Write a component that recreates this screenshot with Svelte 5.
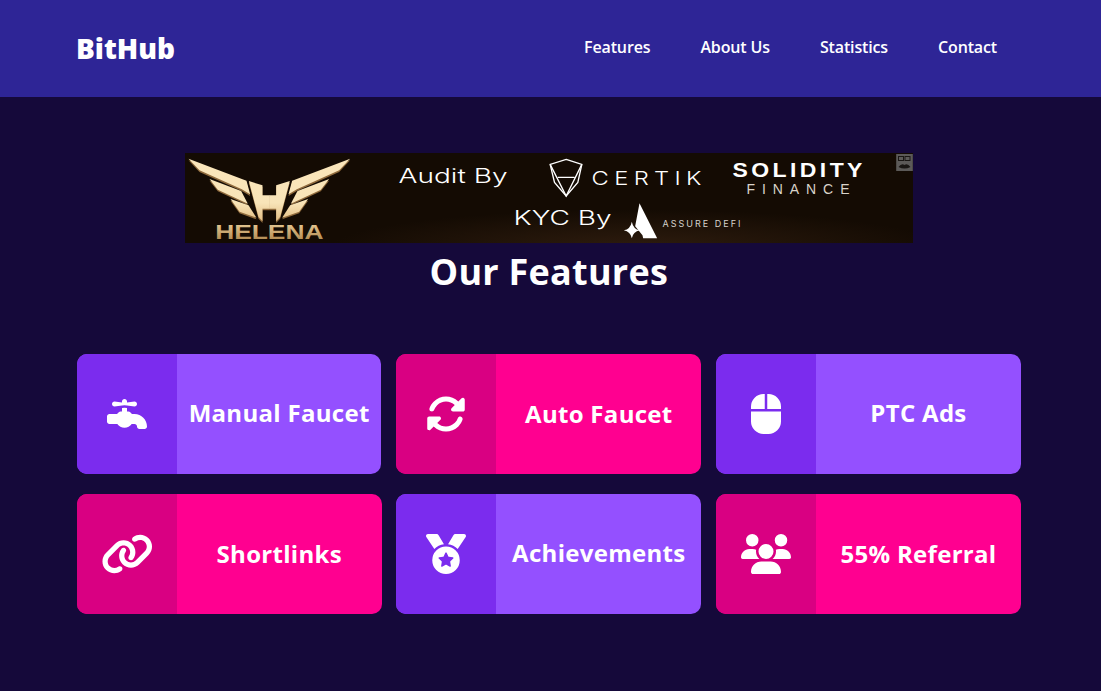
<script>
  const nav = ['Features', 'About Us', 'Statistics', 'Contact'];
  const icons = {
    faucet: { vb: '0 0 512 512', d: 'M192 96v12L96 96c-17.7 0-32 14.3-32 32s14.3 32 32 32l96-12 31-3.9 1-.1 1 .1 31 3.9 96 12c17.7 0 32-14.3 32-32s-14.3-32-32-32l-96 12V96c0-17.7-14.3-32-32-32s-32 14.3-32 32zM32 256c-17.7 0-32 14.3-32 32v64c0 17.7 14.3 32 32 32H132.1c20.2 29 53.9 48 91.9 48s71.7-19 91.9-48H352c17.7 0 32 14.3 32 32s14.3 32 32 32h64c17.7 0 32-14.3 32-32c0-88.4-71.6-160-160-160H320l-22.6-22.6c-6-6-14.1-9.4-22.6-9.4H256V180.2l-32-4-32 4V224H173.3c-8.5 0-16.6 3.4-22.6 9.4L128 256H32z' },
    sync: { vb: '0 0 512 512', d: 'M142.9 142.9c62.2-62.2 162.7-62.5 225.3-1L327 183c-6.9 6.9-8.9 17.2-5.2 26.2s12.5 14.8 22.2 14.8H463.5c0 0 0 0 0 0H472c13.3 0 24-10.7 24-24V72c0-9.7-5.8-18.5-14.8-22.2s-19.3-1.7-26.2 5.2L413.4 96.6c-87.6-86.5-228.7-86.2-315.8 1C73.2 122 55.6 150.7 44.8 181.4c-5.9 16.7 2.9 34.9 19.5 40.8s34.9-2.9 40.8-19.5c7.7-21.8 20.2-42.3 37.8-59.8zM16 312v7.6 .7V440c0 9.7 5.8 18.5 14.8 22.2s19.3 1.7 26.2-5.2l41.6-41.6c87.6 86.5 228.7 86.2 315.8-1c24.4-24.4 42.1-53.1 52.9-83.7c5.9-16.7-2.9-34.9-19.5-40.8s-34.9 2.9-40.8 19.5c-7.7 21.8-20.2 42.3-37.8 59.8c-62.2 62.2-162.7 62.5-225.3 1L185 329c6.9-6.9 8.9-17.2 5.2-26.2s-12.5-14.8-22.2-14.8H48.4h-.7H40c-13.3 0-24 10.7-24 24z' },
    mouse: { vb: '0 0 384 512', d: 'M0 352a160 160 0 0 0 160 160h64a160 160 0 0 0 160-160V224H0zM176 0h-16A160 160 0 0 0 0 160v32h176zm48 0h-16v192h176v-32A160 160 0 0 0 224 0z' },
    link: { vb: '0 0 640 512', d: 'M579.8 267.7c56.5-56.5 56.5-148 0-204.5c-50-50-128.8-56.5-186.3-15.4l-1.6 1.1c-14.4 10.3-17.7 30.3-7.4 44.6s30.3 17.7 44.6 7.4l1.6-1.1c32.1-22.9 76-19.3 103.8 8.6c31.5 31.5 31.5 82.5 0 114L422.3 334.8c-31.5 31.5-82.5 31.5-114 0c-27.9-27.9-31.5-71.8-8.6-103.8l1.1-1.6c10.3-14.4 6.9-34.4-7.4-44.6s-34.4-6.9-44.6 7.4l-1.1 1.6C206.5 251.2 213 330 263 380c56.5 56.5 148 56.5 204.5 0L579.8 267.7zM60.2 244.3c-56.5 56.5-56.5 148 0 204.5c50 50 128.8 56.5 186.3 15.4l1.6-1.1c14.4-10.3 17.7-30.3 7.4-44.6s-30.3-17.7-44.6-7.4l-1.6 1.1c-32.1 22.9-76 19.3-103.8-8.6C74 372 74 321 105.5 289.5L217.7 177.2c31.5-31.5 82.5-31.5 114 0c27.9 27.9 31.5 71.8 8.6 103.9l-1.1 1.6c-10.3 14.4-6.9 34.4 7.4 44.6s34.4 6.9 44.6-7.4l1.1-1.6C433.5 260.8 427 182 377 132c-56.5-56.5-148-56.5-204.5 0L60.2 244.3z' },
    medal: { vb: '0 0 512 512', d: 'M4.1 38.2C1.4 34.2 0 29.4 0 24.6C0 11 11 0 24.6 0H133.9c11.2 0 21.7 5.9 27.4 15.5l68.5 114.1c-48.2 6.1-91.3 28.6-123.4 61.9L4.1 38.2zm503.7 0L405.6 191.5c-32.1-33.3-75.2-55.8-123.4-61.9L350.7 15.5C356.5 5.9 366.9 0 378.1 0H487.4C501 0 512 11 512 24.6c0 4.8-1.4 9.6-4.1 13.6zM80 336a176 176 0 1 1 352 0A176 176 0 1 1 80 336zm184.4-94.9c-3.4-7-13.3-7-16.8 0l-22.4 45.4c-1.4 2.8-4 4.7-7 5.1L168 298.9c-7.7 1.1-10.7 10.5-5.2 16l36.3 35.4c2.2 2.2 3.2 5.2 2.7 8.3l-8.6 49.9c-1.3 7.6 6.7 13.5 13.6 9.9l44.8-23.6c2.7-1.4 6-1.4 8.7 0l44.8 23.6c6.9 3.6 14.9-2.2 13.6-9.9l-8.6-49.9c-.5-3 .5-6.1 2.7-8.3l36.3-35.4c5.6-5.4 2.5-14.8-5.2-16l-50.1-7.3c-3-.4-5.7-2.4-7-5.1l-22.4-45.4z' },
    users: { vb: '0 0 640 512', d: 'M144 160A80 80 0 1 0 144 0a80 80 0 1 0 0 160zm368 0A80 80 0 1 0 512 0a80 80 0 1 0 0 160zM0 298.7C0 310.4 9.6 320 21.3 320H234.7c.2 0 .4 0 .7 0c-26.6-23.5-43.3-57.8-43.3-96c0-7.6 .7-15 1.9-22.3c-13.6-6.3-28.7-9.7-44.6-9.7H106.7C47.8 192 0 239.8 0 298.7zM405.3 320H618.7c11.8 0 21.3-9.6 21.3-21.3C640 239.8 592.2 192 533.3 192H490.7c-15.9 0-31 3.5-44.6 9.7c1.3 7.2 1.9 14.7 1.9 22.3c0 38.2-16.8 72.5-43.3 96c.2 0 .4 0 .7 0zM416 224A96 96 0 1 0 224 224a96 96 0 1 0 192 0zM128 485.3c0 14.7 11.9 26.7 26.7 26.7H485.3c14.7 0 26.7-11.9 26.7-26.7C512 411.7 452.3 352 378.7 352H261.3C187.7 352 128 411.7 128 485.3z' }
  };
  const cards = [
    { label: 'Manual Faucet', icon: 'faucet', tone: 'violet' },
    { label: 'Auto Faucet', icon: 'sync', tone: 'pink' },
    { label: 'PTC Ads', icon: 'mouse', tone: 'violet' },
    { label: 'Shortlinks', icon: 'link', tone: 'pink' },
    { label: 'Achievements', icon: 'medal', tone: 'violet' },
    { label: '55% Referral', icon: 'users', tone: 'pink' }
  ];
</script>

<header class="top">
  <div class="top-inner">
    <span class="logo">BitHub</span>
    <nav class="menu">
      {#each nav as item}<span class="menu-item">{item}</span>{/each}
    </nav>
  </div>
</header>

<main class="page">
  <svg class="banner" viewBox="185.5 153 728 90" role="img" aria-label="Helena advertisement">
    <defs>
      <radialGradient id="glow" cx="0.62" cy="1.05" r="0.42">
        <stop offset="0" stop-color="#2e1c0e" />
        <stop offset="1" stop-color="#140b03" />
      </radialGradient>
      <linearGradient id="gold" gradientUnits="userSpaceOnUse" x1="0" y1="20" x2="0" y2="205">
        <stop offset="0" stop-color="#fbe6bb" />
        <stop offset="0.7" stop-color="#f8e4b8" />
        <stop offset="1" stop-color="#e2bd83" />
      </linearGradient>
      <linearGradient id="goldText" x1="0" y1="0" x2="0" y2="1">
        <stop offset="0" stop-color="#ecd09c" />
        <stop offset="1" stop-color="#a87f45" />
      </linearGradient>
      <g id="half">
        <polygon points="12,17 186,83 197,124 172,109 45,52" />
        <polygon points="75,78 170,114 190,152 100,110" />
        <polygon points="138,138 192,157 216,194 165,176" />
        <polygon points="193,84 234,97 234,127 255,127 255,167 234,167 234,205 222,192" />
      </g>
    </defs>
    <rect x="185.5" y="153" width="728" height="90" fill="url(#glow)" />
    <g transform="translate(185,153) scale(0.3333)">
      <g fill="#8f6a3c" transform="translate(0,5)">
        <use href="#half" />
        <use href="#half" transform="translate(509,0) scale(-1,1)" />
      </g>
      <g fill="url(#gold)">
        <use href="#half" />
        <use href="#half" transform="translate(509,0) scale(-1,1)" />
      </g>
    </g>
    <g transform="translate(180,145) scale(0.3333)">
      <text class="helena" x="107" y="283" textLength="325" lengthAdjust="spacingAndGlyphs" fill="url(#goldText)" font-size="60">HELENA</text>
    </g>
    <text class="thin" x="399" y="183" font-size="20" textLength="109" lengthAdjust="spacingAndGlyphs">Audit By</text>
    <text class="thin" x="514" y="225" font-size="20" textLength="98" lengthAdjust="spacingAndGlyphs">KYC By</text>
    <g transform="translate(545,145) scale(0.3333)">
      <g fill="none" stroke="#fff" stroke-width="4">
        <polygon points="65,43 112,58 100,112 65,153 30,112 17,58" />
        <path d="M17,58 65,153 112,58 M40,97 H90" />
      </g>
      <polygon fill="#fff" points="285,175 338,280 296,280 280,208 300,278 272,244" />
      <path fill="#fff" d="M262,230 Q266,252 286,256 Q266,260 262,280 Q258,260 238,256 Q258,252 262,230Z" />
    </g>
    <g transform="translate(592,185) scale(1.25,1)">
      <text class="certik" font-size="19" textLength="88">CERTIK</text>
    </g>
    <g transform="translate(733,177) scale(1.15,1)">
      <text class="solidity" font-size="20" textLength="113">SOLIDITY</text>
    </g>
    <text class="finance" x="747" y="194" font-size="14" textLength="103">FINANCE</text>
    <text class="assure" x="663" y="227" font-size="9" textLength="78">ASSURE DEFI</text>
    <rect x="896.7" y="154" width="16.6" height="17" fill="#5c5a58" />
    <g fill="none" stroke="#1a1714" stroke-width="1">
      <rect x="899" y="156.5" width="5" height="4" />
      <rect x="905.5" y="156.5" width="5" height="4" />
    </g>
    <path d="M899 167 Q902 163 905 165 Q908 163 911 167 Q905 170 899 167Z" fill="#1a1714" />
  </svg>

  <h1 class="title">Our Features</h1>

  <section class="grid">
    {#each cards as card}
      <article class="card {card.tone}">
        <div class="card-icon">
          <svg viewBox={icons[card.icon].vb} class="glyph {card.icon}" aria-hidden="true"><path d={icons[card.icon].d} /></svg>
        </div>
        <div class="card-label">{card.label}</div>
      </article>
    {/each}
  </section>
</main>

<style>
  :global(body) {
    margin: 0;
    background: #15093a;
    font-family: "Open Sans", sans-serif;
    color: #fff;
  }
  .top {
    background: #2e2596;
    height: 97px;
  }
  .top-inner {
    box-sizing: border-box;
    height: 100%;
    padding: 0 80px 0 77px;
    display: flex;
    align-items: center;
    justify-content: space-between;
  }
  .logo {
    font-size: 28px;
    font-weight: 800;
    line-height: 38px;
    margin-top: -2px;
    margin-left: -1px;
  }
  .menu {
    display: flex;
    gap: 50px;
    padding-right: 24px;
  }
  .menu-item {
    font-size: 16px;
    font-weight: 600;
    line-height: 20px;
    letter-spacing: -0.14px;
    margin-top: -4px;
  }
  .page {
    padding: 56px 80.2px 77px 76.8px;
  }
  .banner {
    display: block;
    width: 728px;
    height: 90px;
    margin: 0 auto;
  }
  .thin { font-family: Inter, sans-serif; font-weight: 300; fill: #fff; }
  .helena { font-family: "Liberation Sans", sans-serif; font-weight: 700; }
  .certik { font-family: Inter, sans-serif; font-weight: 300; fill: #fff; }
  .solidity { font-family: "Liberation Sans", sans-serif; font-weight: 700; fill: #fff; }
  .finance { font-family: "Liberation Sans", sans-serif; font-weight: 400; fill: #d9d3c9; }
  .assure { font-family: Inter, sans-serif; font-weight: 400; fill: #d6d2cc; }
  .title {
    margin: 2px 0 55px;
    text-align: center;
    font-size: 36px;
    font-weight: 700;
    line-height: 54px;
    letter-spacing: 0.25px;
  }
  .grid {
    display: grid;
    grid-template-columns: repeat(3, 1fr);
    gap: 20px 15px;
  }
  .card {
    display: flex;
    height: 120px;
    border-radius: 10px;
    overflow: hidden;
  }
  .card:nth-child(4) { margin-right: -0.3px; }
  .violet { background: #9450ff; }
  .violet .card-icon { background: #7b2cee; }
  .pink { background: #ff0090; }
  .pink .card-icon { background: #d90082; }
  .card-icon {
    flex: 0 0 100px;
    display: flex;
    align-items: center;
    justify-content: center;
  }
  .glyph {
    height: 40px;
    fill: #fff;
  }
  .glyph.link { height: 42px; }
  .card-label {
    flex: 1;
    display: flex;
    align-items: center;
    justify-content: center;
    font-size: 24px;
    font-weight: 700;
    letter-spacing: 0.3px;
  }
  .violet .card-label { padding-bottom: 4px; }
  .pink .card-label { padding-bottom: 2px; }
</style>
